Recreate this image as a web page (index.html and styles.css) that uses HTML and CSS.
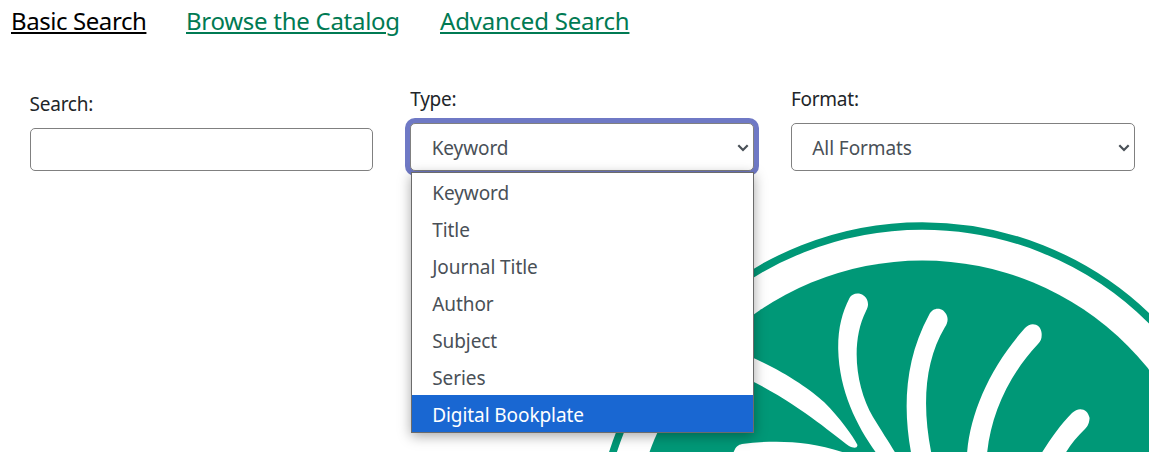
FILE: index.html
```
<!DOCTYPE html>
<html lang="en">
<head>
<meta charset="utf-8">
<title>Catalog Search</title>
<link rel="stylesheet" href="styles.css">
</head>
<body>
<svg class="emblem" viewBox="0 0 1149 452" aria-hidden="true">
  <circle class="emblem-ring" cx="922.3" cy="550.5" r="324.6"/>
  <circle class="emblem-disc" cx="922.3" cy="550.5" r="290"/>
  <g class="emblem-leaf">
    <path d="M730 349C770 362 808 387 824 402C840 418 853 436 857.500 445C857 449 853 448 849 446C832 434 790 396 730 371Z"/>
    <path d="M849.500 298C853 291 865 292 867.500 301C868.500 305 868 307 866 311C850 343 856 388 873 417C882 432 889 442 896 454H877C858 428 839 392 838.200 349C838 328 842 313 849.500 298Z"/>
    <path d="M929 315C933 306 944 307 947 316C948.500 320 947 324 945 327C924 362 922 407 931.500 454H911.300C903 410 904 361 929 315Z"/>
    <path d="M1025 328C1031 321 1041 324 1041.600 333C1042 338 1041 341 1038 344C1008 376 991 415 987 454H967C970 413 990 367 1025 328Z"/>
    <path d="M1072 413C1079 406 1088 409 1089.600 418C1089 425 1087 427 1084 430C1077 437 1070 445 1065 454H1041C1050 440 1060 425 1072 413Z"/>
    <path d="M733 454C735 447 738 445 742 444C773 440 810 440 848 454Z"/>
  </g>
</svg>

<nav class="tabs">
  <a class="tab tab-basic" href="#">Basic Search</a>
  <a class="tab tab-browse" href="#">Browse the Catalog</a>
  <a class="tab tab-advanced" href="#">Advanced Search</a>
</nav>

<form class="search-form">
  <div class="field">
    <label class="label" for="q">Search:</label>
    <input class="control control-input" id="q" type="text">
  </div>
  <div class="field">
    <span class="label">Type:</span>
    <div class="control control-select is-focused">
      <span class="value">Keyword</span>
      <svg class="chevron" viewBox="0 0 12 8"><path d="M1.300 1.300L6 6L10.700 1.300"/></svg>
      <ul class="menu">
        <li class="option">Keyword</li>
        <li class="option">Title</li>
        <li class="option">Journal Title</li>
        <li class="option">Author</li>
        <li class="option">Subject</li>
        <li class="option">Series</li>
        <li class="option is-active">Digital Bookplate</li>
      </ul>
    </div>
  </div>
  <div class="field">
    <span class="label">Format:</span>
    <div class="control control-select">
      <span class="value">All Formats</span>
      <svg class="chevron" viewBox="0 0 12 8"><path d="M1.300 1.300L6 6L10.700 1.300"/></svg>
    </div>
  </div>
</form>
</body>
</html>
```
FILE: styles.css
```
* { box-sizing: border-box; }

body {
  margin: 0;
  height: 452px;
  overflow: hidden;
  position: relative;
  background: #fff;
  color: #212529;
  font-family: "Segoe UI", "Noto Sans", "Open Sans", sans-serif;
  font-size: 19px;
  letter-spacing: -0.08px;
}

.emblem {
  position: absolute;
  inset: 0;
  z-index: -1;
  width: 1149px;
  height: 452px;
}
.emblem-ring { fill: none; stroke: #009877; stroke-width: 7.5; }
.emblem-disc { fill: #009877; }
.emblem-leaf { fill: #fff; }

.tabs {
  display: flex;
  gap: 40px;
  height: 85px;
  padding: 4px 11px 0;
  font-size: 24px;
  line-height: 34px;
}
.tab {
  color: #007a53;
  white-space: nowrap;
  text-decoration-thickness: 2px;
  text-underline-offset: 2px;
  height: 34px;
}
.tab-basic { color: #000; width: 135px; letter-spacing: -0.42px; }
.tab-browse { width: 214px; letter-spacing: -0.27px; }
.tab-advanced { width: 190px; letter-spacing: -0.21px; }

.search-form {
  display: grid;
  grid-template-columns: repeat(3, 343.670px);
  column-gap: 37px;
  align-items: end;
  height: 85px;
  padding-left: 29.600px;
}
.field { display: flex; flex-direction: column; }
.label { line-height: 28px; margin-bottom: 10px; letter-spacing: -0.25px; }

.control {
  width: 100%;
  border: 1px solid #808080;
  border-radius: 5px;
  background: #fff;
  color: #495057;
  font: inherit;
}
.control-input { height: 43px; padding: 0 20px; }
.control-select {
  position: relative;
  display: flex;
  align-items: center;
  justify-content: space-between;
  height: 48px;
  padding: 0 4px 0 20.400px;
}
.value { padding-top: 2px; }
.is-focused { box-shadow: 0 0 0 5px #6f79c5; }

.chevron {
  width: 12px;
  height: 8px;
  margin-top: 2px;
  fill: none;
  stroke: #495057;
  stroke-width: 2.200;
}

.menu {
  position: absolute;
  top: 48px;
  left: 0;
  width: 343px;
  margin: 0;
  padding: 0;
  list-style: none;
  border: 1px solid #6b6b6b;
  background: #fff;
  box-shadow: 0 3px 12px rgba(0, 0, 0, .35);
}
.option { height: 37px; line-height: 40px; padding-left: 20px; }
.is-active { background: #1967d2; color: #fff; }
```
